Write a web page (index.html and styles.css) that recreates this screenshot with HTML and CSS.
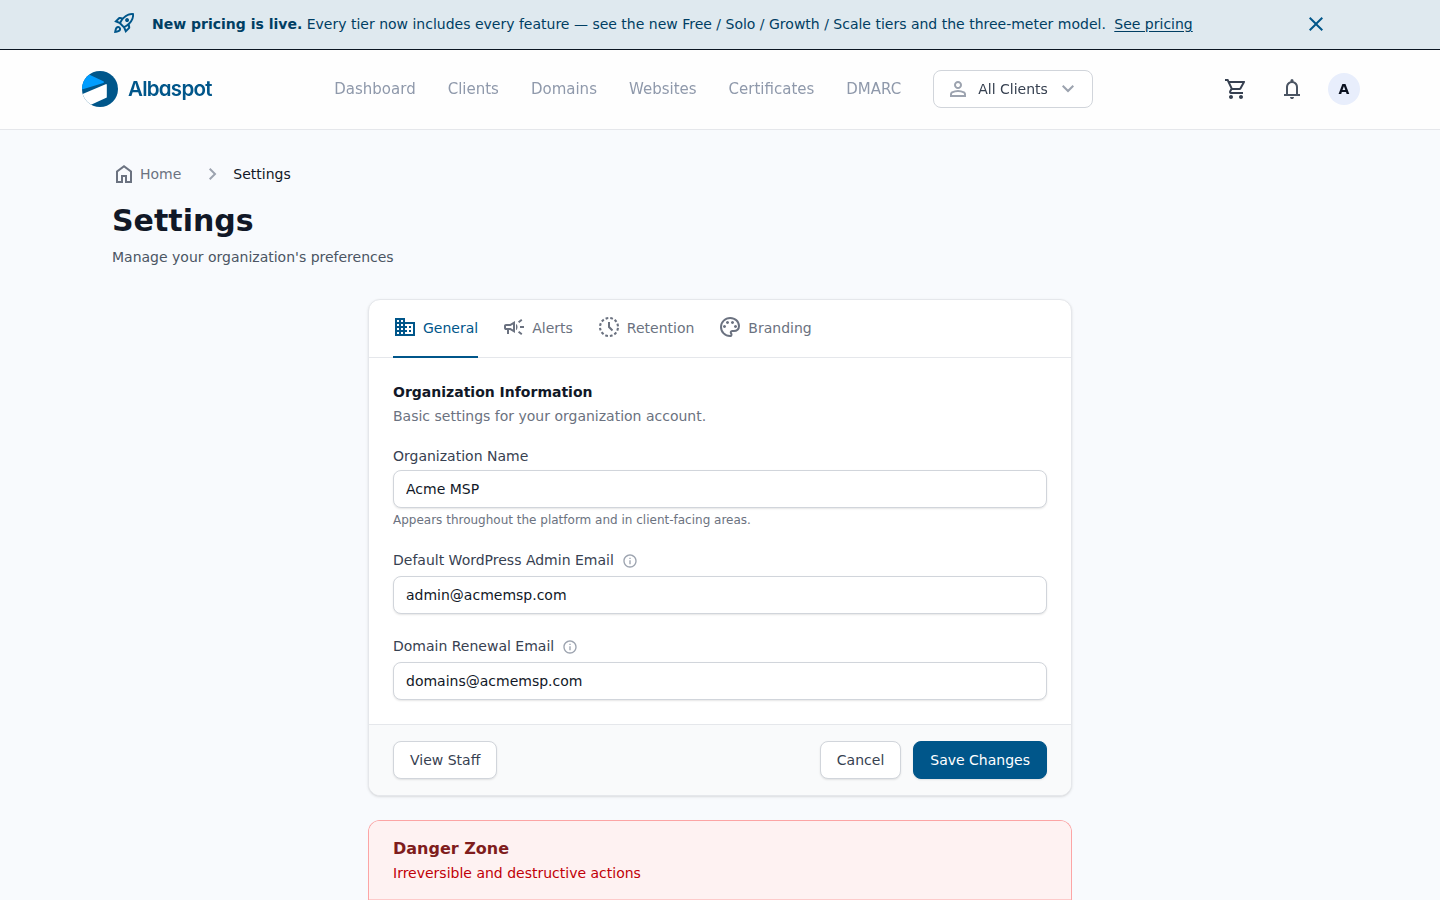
FILE: index.html
```html
<!DOCTYPE html>
<html lang="en">
<head>
<meta charset="utf-8">
<title>Settings - Albaspot</title>
<link rel="stylesheet" href="styles.css">
</head>
<body>
<div class="banner">
  <svg class="icon" viewBox="0 -960 960 960"><path d="m226-559 78 33q14-28 29-54t33-52l-56-11-84 84Zm142 83 114 113q42-16 90-49t90-75q70-70 109.5-155.5T806-800q-72-5-158 34.5T492-656q-42 42-75 90t-49 90Zm178-65q-23-23-23-56.5t23-56.5q23-23 57-23t57 23q23 23 23 56.5T660-541q-23 23-57 23t-57-23Zm19 321 84-84-11-56q-26 18-52 32.5T532-299l33 79Zm313-653q19 121-23.5 235.5T708-419l20 99q4 20-2 39t-20 33L538-80l-84-197-171-171-197-84 167-168q14-14 33.5-20t39.5-2l99 20q104-104 218-147t235-24ZM157-321q35-35 85.5-35.5T328-322q35 35 34.5 85.5T327-151q-25 25-83.5 43T82-76q14-103 32-161.5t43-83.5Zm57 56q-10 10-20 36.5T180-175q27-4 53.5-13.5T270-208q12-12 13-29t-11-29q-12-12-29-11.5T214-265Z"/></svg>
  <p class="banner-text"><strong>New pricing is live.</strong> Every tier now includes every feature — see the new Free / Solo / Growth / Scale tiers and the three-meter model. <a class="banner-link" href="#">See pricing</a></p>
  <svg class="icon" viewBox="0 0 24 24"><path d="M19 6.41 17.59 5 12 10.59 6.41 5 5 6.41 10.59 12 5 17.59 6.41 19 12 13.41 17.59 19 19 17.59 13.41 12z"/></svg>
</div>
<header class="header">
  <div class="header-inner">
    <a class="brand" href="#">
      <svg class="brand-mark" viewBox="0 0 40 40"><defs><clipPath id="disc"><circle cx="20" cy="20" r="18"/></clipPath></defs><g clip-path="url(#disc)"><rect width="40" height="40" fill="#00568a"/><path fill="#009dff" d="M0 0 9 5.6 23.4 12.2Q24.6 13 23.4 14L0 21.2Z"/><path fill="#fff" d="M0 26 25.6 15.2Q26.8 14.8 26.8 16V28.6L10.5 36 0 40Z"/></g></svg>
      <span class="brand-name">Albaspot</span>
    </a>
    <nav class="nav">
      <a>Dashboard</a><a>Clients</a><a>Domains</a><a>Websites</a><a>Certificates</a><a>DMARC</a>
      <button class="client-select">
        <svg class="icon" viewBox="0 -960 960 960"><path d="M480-480q-66 0-113-47t-47-113q0-66 47-113t113-47q66 0 113 47t47 113q0 66-47 113t-113 47ZM160-160v-112q0-34 17.5-62.5T224-378q62-31 126-46.5T480-440q66 0 130 15.5T736-378q29 15 46.5 43.5T800-272v112H160Zm80-80h480v-32q0-11-5.5-20T700-306q-54-27-109-40.5T480-360q-56 0-111 13.5T260-306q-9 5-14.5 14t-5.5 20v32Zm240-320q33 0 56.5-23.5T560-640q0-33-23.5-56.5T480-720q-33 0-56.5 23.5T400-640q0 33 23.5 56.5T480-560Z"/></svg>
        <span>All Clients</span>
        <svg class="icon" viewBox="0 0 24 24"><path d="m12 15.4-6-6L7.4 8l4.6 4.6L16.6 8 18 9.4z"/></svg>
      </button>
    </nav>
    <div class="actions">
      <span class="action"><svg class="icon" viewBox="0 0 24 24"><path d="M15.55 13c.75 0 1.41-.41 1.75-1.03l3.58-6.49A.996.996 0 0 0 20.01 4H5.21l-.94-2H1v2h2l3.6 7.59-1.35 2.44C4.52 15.37 5.48 17 7 17h12v-2H7l1.1-2h7.45zM6.16 6h12.15l-2.76 5H8.53L6.16 6zM7 18c-1.1 0-1.99.9-1.99 2S5.9 22 7 22s2-.9 2-2-.9-2-2-2zm10 0c-1.1 0-1.99.9-1.99 2s.89 2 1.99 2 2-.9 2-2-.9-2-2-2z"/></svg></span>
      <span class="action bell"><svg class="icon" viewBox="0 -960 960 960"><path d="M160-200v-80h80v-280q0-83 50-147.5T420-792v-28q0-25 17.5-42.5T480-880q25 0 42.5 17.5T540-820v28q80 20 130 84.5T720-560v280h80v80H160Zm320 120q-33 0-56.5-23.5T400-160h160q0 33-23.5 56.5T480-80ZM320-280h320v-280q0-66-47-113t-113-47q-66 0-113 47t-47 113v280Z"/></svg></span>
      <span class="avatar">A</span>
    </div>
  </div>
</header>
<main class="main">
  <nav class="crumbs">
    <a class="crumb-home"><svg class="icon" viewBox="0 0 24 24"><path d="M6 19h3v-6h6v6h3v-9l-6-4.5L6 10v9Zm-2 2V9l8-6 8 6v12h-7v-6h-2v6H4Z"/></svg>Home</a>
    <svg class="icon crumb-sep" viewBox="0 0 24 24"><path d="M12.6 12 8 7.4 9.4 6l6 6-6 6L8 16.6z"/></svg>
    <span class="crumb-current">Settings</span>
  </nav>
  <h1 class="title">Settings</h1>
  <p class="subtitle">Manage your organization's preferences</p>

  <div class="column">
    <section class="card">
      <div class="tabs">
        <a class="tab tab-active"><svg class="icon" viewBox="0 -960 960 960"><path d="M80-120v-720h400v160h400v560H80Zm80-80h80v-80h-80v80Zm0-160h80v-80h-80v80Zm0-160h80v-80h-80v80Zm0-160h80v-80h-80v80Zm160 480h80v-80h-80v80Zm0-160h80v-80h-80v80Zm0-160h80v-80h-80v80Zm0-160h80v-80h-80v80Zm160 480h320v-400H480v80h80v80h-80v80h80v80h-80v80Zm160-240v-80h80v80h-80Zm0 160v-80h80v80h-80Z"/></svg>General</a>
        <a class="tab"><svg class="icon" viewBox="0 -960 960 960"><path d="M720-440v-80h160v80H720Zm48 280-128-96 48-64 128 96-48 64Zm-80-480-48-64 128-96 48 64-128 96ZM200-200v-160h-40q-33 0-56.5-23.5T80-440v-80q0-33 23.5-56.5T160-600h160l200-120v480L320-360h-40v160h-80Zm240-182v-196l-98 58H160v80h182l98 58Zm120 36v-268q27 24 43.5 58.5T620-480q0 41-16.5 75.5T560-346Z"/></svg>Alerts</a>
        <a class="tab"><svg class="icon" viewBox="0 0 24 24"><circle cx="12" cy="12" r="9" fill="none" stroke="currentColor" stroke-width="2.1" stroke-dasharray="2.7 2.0124" stroke-dashoffset="-1"/><path d="M11 7h2v4.6l3.2 3.2-1.4 1.4L11 12.4z"/></svg>Retention</a>
        <a class="tab"><svg class="icon" viewBox="0 -960 960 960"><path d="M480-80q-82 0-155-31.500t-127.500-86Q143-252 111.500-325T80-480q0-83 32.500-156t88-127Q256-817 330-848.500T488-880q80 0 151 27.500t124.500 76q53.500 48.500 85 115T880-518q0 115-70 176.500T640-280h-74q-9 0-12.500 5t-3.500 11q0 12 15 34.500t15 51.500q0 50-27.500 74T480-80ZM260-440q26 0 43-17t17-43q0-26-17-43t-43-17q-26 0-43 17t-17 43q0 26 17 43t43 17Zm120-160q26 0 43-17t17-43q0-26-17-43t-43-17q-26 0-43 17t-17 43q0 26 17 43t43 17Zm200 0q26 0 43-17t17-43q0-26-17-43t-43-17q-26 0-43 17t-17 43q0 26 17 43t43 17Zm120 160q26 0 43-17t17-43q0-26-17-43t-43-17q-26 0-43 17t-17 43q0 26 17 43t43 17ZM480-160q9 0 14.500-5t5.500-13q0-14-15-33t-15-57q0-42 29-67t71-25h70q66 0 113-38.500T800-518q0-121-92.500-201.500T488-800q-136 0-232 93t-96 227q0 133 93.500 226.500T480-160Z"/></svg>Branding</a>
      </div>
      <div class="card-body">
        <h2 class="section-title">Organization Information</h2>
        <p class="section-desc">Basic settings for your organization account.</p>
        <div class="fields">
          <div class="field field-first">
            <label class="label">Organization Name</label>
            <input class="input" type="text" value="Acme MSP">
            <p class="help">Appears throughout the platform and in client-facing areas.</p>
          </div>
          <div class="field">
            <label class="label">Default WordPress Admin Email <svg class="info" viewBox="0 0 24 24"><path d="M11 7h2v2h-2zm0 4h2v6h-2zm1-9C6.48 2 2 6.480 2 12s4.480 10 10 10 10-4.480 10-10S17.520 2 12 2zm0 18c-4.410 0-8-3.590-8-8s3.590-8 8-8 8 3.590 8 8-3.590 8-8 8z"/></svg></label>
            <input class="input" type="text" value="admin@acmemsp.com">
          </div>
          <div class="field">
            <label class="label">Domain Renewal Email <svg class="info" viewBox="0 0 24 24"><path d="M11 7h2v2h-2zm0 4h2v6h-2zm1-9C6.48 2 2 6.480 2 12s4.480 10 10 10 10-4.480 10-10S17.520 2 12 2zm0 18c-4.410 0-8-3.590-8-8s3.590-8 8-8 8 3.590 8 8-3.590 8-8 8z"/></svg></label>
            <input class="input" type="text" value="domains@acmemsp.com">
          </div>
        </div>
      </div>
      <div class="card-footer">
        <button class="btn">View Staff</button>
        <div class="btn-group"><button class="btn">Cancel</button><button class="btn btn-primary">Save Changes</button></div>
      </div>
    </section>
    <section class="danger">
      <div class="danger-head">
        <h2 class="danger-title">Danger Zone</h2>
        <p class="danger-desc">Irreversible and destructive actions</p>
      </div>
    </section>
  </div>
</main>
</body>
</html>
```
FILE: styles.css
```css
* { box-sizing: border-box; margin: 0; padding: 0; }
html { height: 100%; overflow: hidden; }
body {
  height: 100%;
  overflow: hidden;
  background: #f8fafd;
  color: #111827;
  font: 14px/20px "DejaVu Sans", sans-serif;
}
a { color: inherit; text-decoration: none; }
button, input { font: inherit; color: inherit; }
.icon { width: 24px; height: 24px; flex: none; fill: currentColor; display: block; }

.banner {
  height: 50px;
  padding: 0 112px 1px;
  display: flex;
  align-items: center;
  gap: 16px;
  background: #dfe9ef;
  border-bottom: 1px solid #0b1622;
  color: #003e63;
}
.banner .icon { color: #00568a; }
.banner .icon:first-child { margin-bottom: 2px; }
.banner-text { flex: 1; white-space: nowrap; }
.banner-link { margin-left: 4px; text-decoration: underline; text-underline-offset: 2px; }

.header {
  height: 80px;
  background: #fefefe;
  border-bottom: 1px solid #e5e7eb;
  will-change: transform;
}
.header-inner {
  height: 78px;
  padding: 0 80px;
  display: flex;
  align-items: center;
  justify-content: space-between;
}
.brand { width: 131.5px; display: flex; align-items: center; gap: 8px; }
.brand-mark { width: 40px; height: 40px; flex: none; }
.brand-name {
  color: #00568a;
  font: 600 20.5px/26px Inter, sans-serif;
  font-feature-settings: "cv11";
  letter-spacing: -.75px;
}
.nav { display: flex; align-items: center; gap: 32px; font-size: 15px; color: #8f99ab; }
.client-select {
  width: 160px;
  height: 38px;
  padding: 0 12px;
  display: flex;
  align-items: center;
  gap: 8px;
  background: #fff;
  border: 1px solid #d1d5db;
  border-radius: 8px;
  font-size: 14px;
  color: #374151;
}
.client-select .icon { color: #9ca3af; }
.actions { display: flex; align-items: center; gap: 16px; color: #374151; }
.action { width: 40px; height: 40px; display: flex; align-items: center; justify-content: center; }
.bell { color: #4b5563; }
.avatar {
  width: 32px;
  height: 32px;
  border-radius: 50%;
  background: #e8eefc;
  color: #0b1220;
  font-weight: 700;
  line-height: 32px;
  text-align: center;
}

.main { padding: 32px 112px 0; }
.crumbs { display: flex; align-items: center; color: #6b7280; }
.crumb-home { display: flex; align-items: center; gap: 4px; }
.crumb-sep { margin: 0 8px 0 20px; color: #9ca3af; }
.crumb-current { color: #111827; }
.title { margin-top: 17px; font-size: 30px; line-height: 36px; font-weight: 700; }
.subtitle { margin-top: 8px; color: #4b5563; }

.column { width: 704px; margin: 32px auto 0; }
.card {
  background: #fff;
  border: 1px solid #e5e7eb;
  border-radius: 12px;
  box-shadow: 0 1px 3px rgba(0,0,0,.1), 0 1px 2px -1px rgba(0,0,0,.1);
  overflow: hidden;
}
.tabs { height: 58px; padding: 0 24px; display: flex; gap: 24px; border-bottom: 1px solid #e5e7eb; color: #6b7280; }
.tab { height: 58px; display: flex; align-items: center; gap: 6px; border-bottom: 2px solid transparent; }
.tab .icon { margin-bottom: 2px; }
.tab-active { color: #00568a; border-color: #00568a; }
.card-body { padding: 24px; }
.section-title { font-size: 14px; line-height: 20px; font-weight: 700; }
.section-desc { margin-top: 4px; color: #6b7280; }
.fields { margin-top: 20px; display: grid; gap: 22px; }
.field { display: grid; gap: 6px; }
.field-first { gap: 4px; }
.label { display: flex; align-items: center; gap: 8px; color: #374151; }
.info { width: 16px; height: 16px; margin-top: 1px; fill: #9ca3af; }
.input {
  width: 100%;
  height: 38px;
  padding: 0 12px;
  border: 1px solid #d1d5db;
  border-radius: 8px;
  background: #fff;
  box-shadow: 0 1px 2px rgba(0,0,0,.1);
}
.help { font-size: 12px; line-height: 16px; color: #6b7280; }
.card-footer {
  padding: 16px 24px;
  display: flex;
  justify-content: space-between;
  background: #f9fafb;
  border-top: 1px solid #e5e7eb;
}
.btn-group { display: flex; gap: 12px; }
.btn {
  height: 38px;
  padding: 0 16px;
  background: #fff;
  border: 1px solid #d1d5db;
  border-radius: 8px;
  box-shadow: 0 1px 2px rgba(0,0,0,.1);
  color: #374151;
}
.btn-primary { background: #00568a; border-color: #00568a; color: #fff; }

.danger {
  margin-top: 24px;
  background: #fff;
  border: 1px solid #fca5a5;
  border-bottom: 0;
  border-radius: 12px 12px 0 0;
  overflow: hidden;
}
.danger-head { height: 79px; padding: 16px 24px; background: #fef2f2; border-bottom: 1px solid #fecaca; }
.danger-title { font-size: 16px; line-height: 24px; font-weight: 700; color: #7f1d1d; }
.danger-desc { margin-top: 2px; color: #c10007; }
```
